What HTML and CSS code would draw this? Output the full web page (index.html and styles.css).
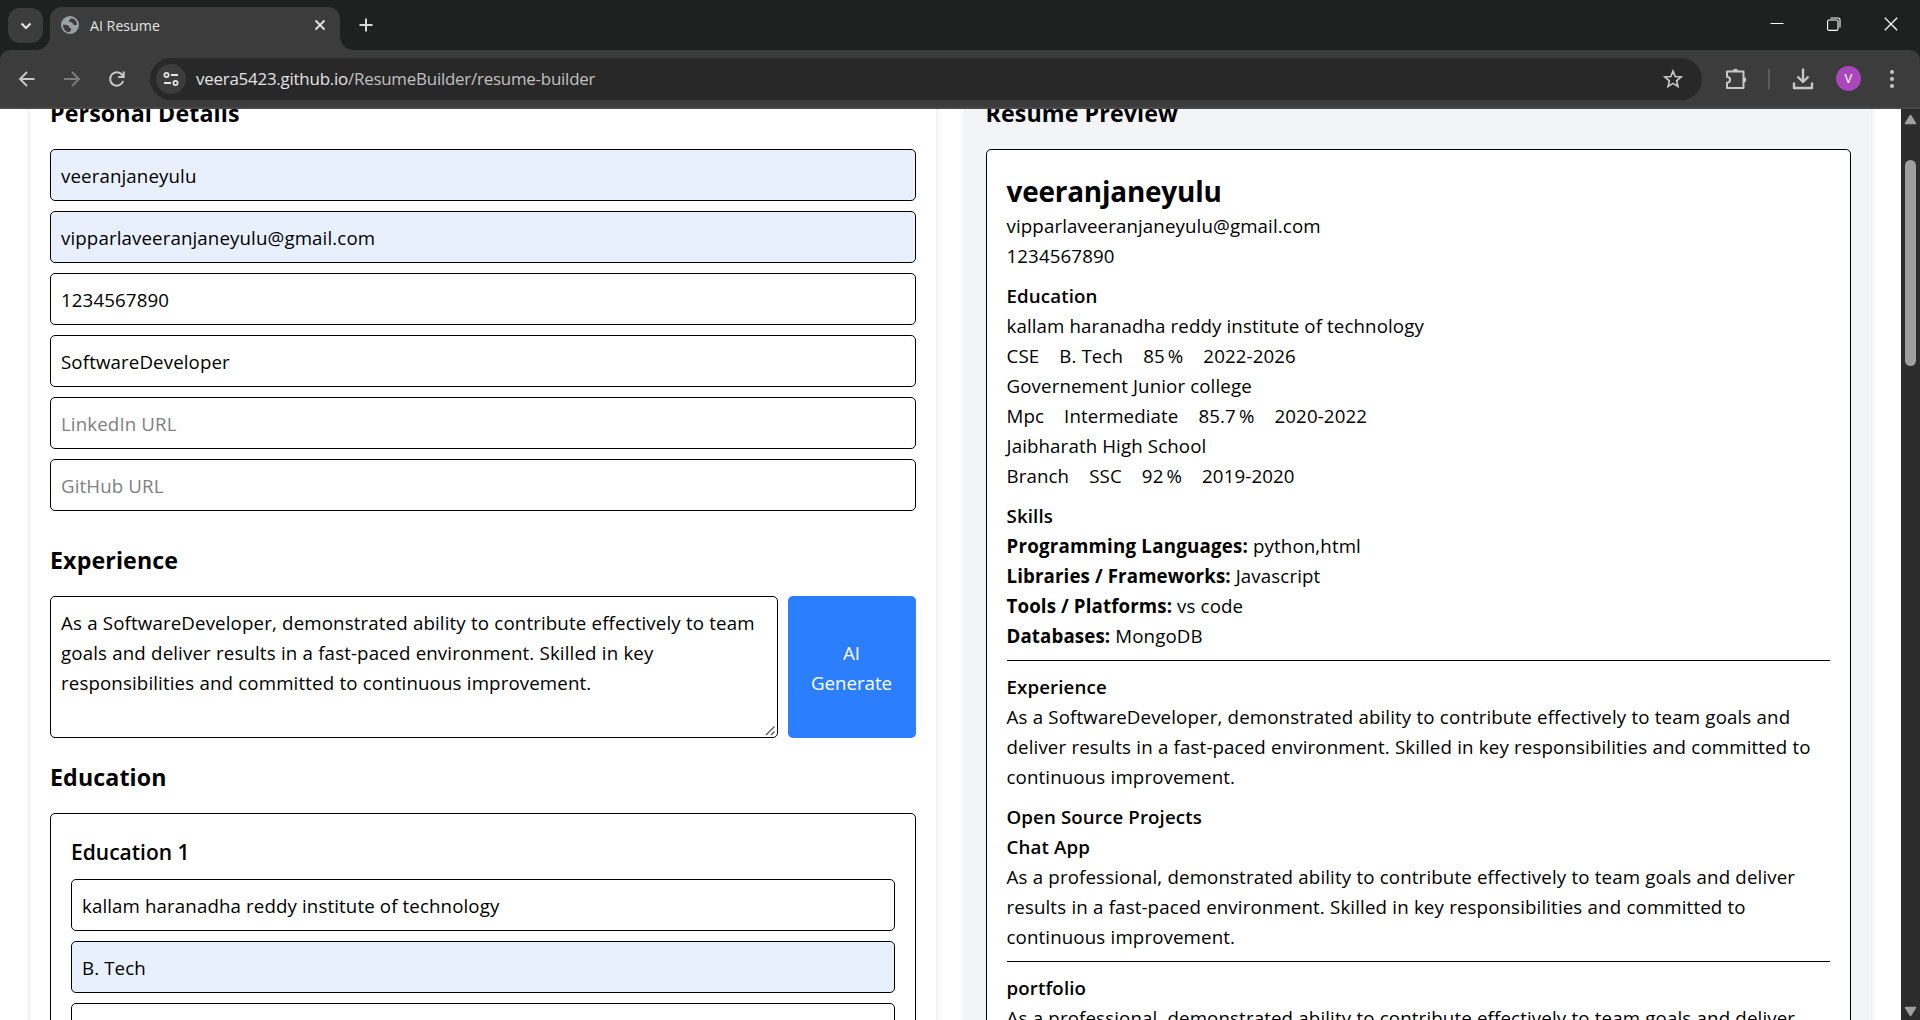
FILE: index.html
```html
<!DOCTYPE html>
<html lang="en">
<head>
<meta charset="utf-8">
<title>AI Resume</title>
<link rel="stylesheet" href="styles.css">
</head>
<body>
<div class="browser">
  <div class="tabstrip">
    <div class="tab-search"><svg width="12" height="12" viewBox="0 0 12 12"><path d="M1.500 3.500L6 8l4.500-4.500" fill="none" stroke="#e3e3e3" stroke-width="2.200"/></svg></div>
    <div class="tab">
      <svg class="globe" width="18" height="18" viewBox="0 0 18 18"><circle cx="9" cy="9" r="9" fill="#9aa0a6"/><path d="M2 8.500l3.500 .5c2 .3 2.500 1.200 2.500 2.500l2 .5v2.500l-2 1.800C4.500 16 1.800 12.500 2 8.500zM10.500 2c-.2 1.500-2.500 1-2.500 3 0 1.300 2 1.200 3 1.600s.6 2.400 2.300 2.400H16c0-3.200-2-6.200-5.500-7z" fill="#3c3c3c"/></svg>
      <span class="tab-title">AI Resume</span>
      <svg class="tab-close" width="12" height="12" viewBox="0 0 12 12"><path d="M1.500 1.500l9 9M10.500 1.500l-9 9" stroke="#e3e3e3" stroke-width="1.800"/></svg>
    </div>
    <svg class="new-tab" width="14" height="14" viewBox="0 0 14 14"><path d="M7 0.500v13M.5 7h13" stroke="#d8d8d8" stroke-width="2"/></svg>
    <div class="window-buttons">
      <svg width="14" height="14" viewBox="0 0 14 14"><path d="M.5 6.500h13" stroke="#fff" stroke-width="1"/></svg>
      <svg width="14" height="14" viewBox="0 0 14 14"><g fill="none" stroke="#fff" stroke-width="1.100"><rect x=".6" y="3" width="10.400" height="10.400" rx="1.500"/><path d="M3.500 1H11a2 2 0 0 1 2 2v7.500"/></g></svg>
      <svg width="14" height="14" viewBox="0 0 14 14"><path d="M.8 .8l12.400 12.400M13.200 .8L.8 13.200" stroke="#fff" stroke-width="1.300"/></svg>
    </div>
  </div>
  <div class="toolbar">
    <svg class="nav" width="18" height="18" viewBox="0 0 18 18"><path d="M16.500 9H2.500M9 2L2 9l7 7" fill="none" stroke="#c7c7c7" stroke-width="1.900"/></svg>
    <svg class="nav" width="18" height="18" viewBox="0 0 18 18"><path d="M1 9h14M9 2l7 7-7 7" fill="none" stroke="#7d7d7d" stroke-width="1.900"/></svg>
    <svg class="nav" width="18" height="18" viewBox="0 0 18 18"><path d="M15.200 11A6.700 6.700 0 1 1 14 4.700L15.500 6.500M15.700 1.500v5.500h-5.500" fill="none" stroke="#c7c7c7" stroke-width="2"/></svg>
    <div class="omnibox">
      <div class="site-info"><svg width="16" height="16" viewBox="0 0 16 16"><g fill="none" stroke="#e3e3e3" stroke-width="1.800"><circle cx="3.500" cy="4" r="2.100"/><circle cx="12.500" cy="12" r="2.100"/><path d="M8 4h7M1 12h7"/></g></svg></div>
      <span class="url">veera5423.github.io<span class="path">/ResumeBuilder/resume-builder</span></span>
      <svg class="star" width="20" height="20" viewBox="0 0 20 20"><path d="M10 2.200l2.200 5.300 5.800.5-4.400 3.800 1.300 5.600-4.900-3-4.900 3 1.300-5.600L2 8l5.800-.5z" fill="none" stroke="#c7c7c7" stroke-width="1.700"/></svg>
    </div>
    <svg class="ext" width="22" height="22" viewBox="0 0 22 22"><path d="M2 3.500h16.500V20H2v-5.200c4.200-.5 4.200-5.500 0-6z" fill="none" stroke="#c7c7c7" stroke-width="2" stroke-linejoin="round"/><path d="M7.700 3.500a2.700 2.700 0 0 1 5.400 0zM18.500 9a2.700 2.700 0 0 1 0 5.400z" fill="#c7c7c7"/></svg>
    <i class="divider"></i>
    <svg class="download" width="22" height="22" viewBox="0 0 22 22"><path d="M11 .5v13M5.500 8.500L11 14l5.500-5.500M2 14.500V20h18v-5.500" fill="none" stroke="#c7c7c7" stroke-width="2.400" stroke-linejoin="round"/></svg>
    <span class="avatar">V</span>
    <svg class="more" width="4" height="18" viewBox="0 0 4 18"><g fill="#c7c7c7"><circle cx="2" cy="2" r="2"/><circle cx="2" cy="9" r="2"/><circle cx="2" cy="16" r="2"/></g></svg>
  </div>
</div>
<div class="viewport">
  <main class="page">
    <section class="card form">
      <h2>Personal Details</h2>
      <div class="fields">
        <div class="input filled">veeranjaneyulu</div>
        <div class="input filled">vipparlaveeranjaneyulu@gmail.com</div>
        <div class="input">1234567890</div>
        <div class="input">SoftwareDeveloper</div>
        <div class="input placeholder">LinkedIn URL</div>
        <div class="input placeholder">GitHub URL</div>
      </div>
      <h2 class="exp">Experience</h2>
      <div class="exp-row">
        <div class="textarea prose">As a SoftwareDeveloper, demonstrated ability to contribute effectively to team<br>goals and deliver results in a fast-paced environment. Skilled in key<br>responsibilities and committed to continuous improvement.
          <svg class="grip" width="11" height="11" viewBox="0 0 11 11"><path d="M1 10l8.500-8.500M6 10l3.500-3.500" stroke="#555" stroke-width="1.300"/></svg>
        </div>
        <button class="generate">AI<br>Generate</button>
      </div>
      <h2 class="edu">Education</h2>
      <div class="edu-box">
        <h3>Education 1</h3>
        <div class="fields">
          <div class="input">kallam haranadha reddy institute of technology</div>
          <div class="input filled">B. Tech</div>
          <div class="input"></div>
        </div>
      </div>
    </section>
    <section class="card preview">
      <h2>Resume Preview</h2>
      <div class="resume">
        <h1>veeranjaneyulu</h1>
        <p>vipparlaveeranjaneyulu@gmail.com</p>
        <p>1234567890</p>
        <h4>Education</h4>
        <p>kallam haranadha reddy institute of technology</p>
        <p class="row"><span>CSE</span><span>B. Tech</span><span>85<i>%</i></span><span>2022-2026</span></p>
        <p>Governement Junior college</p>
        <p class="row"><span>Mpc</span><span>Intermediate</span><span>85.7<i>%</i></span><span>2020-2022</span></p>
        <p>Jaibharath High School</p>
        <p class="row"><span>Branch</span><span>SSC</span><span>92<i>%</i></span><span>2019-2020</span></p>
        <h4>Skills</h4>
        <p><b class="wide">Programming Languages:</b> python,html</p>
        <p><b>Libraries / Frameworks:</b> Javascript</p>
        <p><b>Tools / Platforms:</b> vs code</p>
        <p><b>Databases:</b> MongoDB</p>
        <hr>
        <h4>Experience</h4>
        <p class="prose">As a SoftwareDeveloper, demonstrated ability to contribute effectively to team goals and<br>deliver results in a fast-paced environment. Skilled in key responsibilities and committed to<br>continuous improvement.</p>
        <h4>Open Source Projects</h4>
        <h5>Chat App</h5>
        <p class="prose">As a professional, demonstrated ability to contribute effectively to team goals and deliver<br>results in a fast-paced environment. Skilled in key responsibilities and committed to<br>continuous improvement.</p>
        <hr>
        <h5>portfolio</h5>
        <p class="prose">As a professional, demonstrated ability to contribute effectively to team goals and deliver</p>
      </div>
    </section>
  </main>
  <div class="scrollbar">
    <svg width="13" height="11" viewBox="0 0 13 11"><path d="M6.500 1.500L11.500 9.500H1.500z" fill="#9f9f9f" stroke="#9f9f9f" stroke-width="1.500" stroke-linejoin="round"/></svg>
    <div class="thumb"></div>
    <svg width="13" height="11" viewBox="0 0 13 11"><path d="M6.500 9.500L11.500 1.500H1.500z" fill="#9f9f9f" stroke="#9f9f9f" stroke-width="1.500" stroke-linejoin="round"/></svg>
  </div>
</div>
</body>
</html>
```
FILE: styles.css
```css
* { box-sizing: border-box; margin: 0; padding: 0; }
body { width: 1920px; height: 1020px; overflow: hidden; display: flex; flex-direction: column; background: #fff; color: #000; font: 18.7px/30px "Open Sans", "Noto Sans", sans-serif; }
svg { display: block; flex: none; }
.browser { height: 109px; flex: none; background: #1f2120; color: #e3e3e3; }
.tabstrip { height: 50px; display: flex; align-items: flex-start; padding: 7px 0 0 8px; }
.tab-search { width: 35px; height: 35px; margin-top: 1px; border-radius: 12px; background: #3c3c3c; display: grid; place-items: center; }
.tab { position: relative; width: 290px; height: 43px; margin-left: 7px; padding: 0 14px 7px 11px; border-radius: 12px 12px 0 0; background: #3c3c3c; display: flex; align-items: center; }
.tab::before, .tab::after { content: ""; position: absolute; bottom: 0; width: 13px; height: 13px; }
.tab::before { left: -13px; background: radial-gradient(circle at 0 0, transparent 12.5px, #3c3c3c 13px); }
.tab::after { right: -13px; background: radial-gradient(circle at 100% 0, transparent 12.5px, #3c3c3c 13px); }
.tab-title { margin-left: 11px; padding-top: 1px; font-size: 14.2px; line-height: 20px; }
.tab-close { margin-left: auto; }
.new-tab { margin: 11px 0 0 19px; }
.window-buttons { margin: 10px 22px 0 auto; display: flex; gap: 43px; }
.toolbar { height: 59px; background: #3c3c3c; border-bottom: 2px solid #474747; border-radius: 10px 10px 0 0; display: flex; align-items: center; padding: 0 26px 0 18px; }
.nav { margin-right: 27px; }
.omnibox { width: 1552px; height: 42px; margin-left: -3px; border-radius: 21px; background: #282828; display: flex; align-items: center; padding: 0 19px 0 6px; }
.site-info { width: 30px; height: 30px; border-radius: 50%; background: #3c3c3c; display: grid; place-items: center; }
.url { margin-left: 10px; padding-top: 1px; font-size: 16.9px; letter-spacing: -.22px; color: #e3e3e3; }
.path { color: #c0c0c0; }
.star { margin-left: auto; }
.ext { margin-left: 23px; }
.divider { width: 2px; height: 20px; margin-left: 21px; background: #5c5c5c; }
.download { margin-left: 22px; }
.avatar { width: 25px; height: 25px; margin-left: 22px; border-radius: 50%; background: #ab47bc; color: #fff; font: 13px/25px Roboto, sans-serif; text-align: center; }
.more { margin-left: auto; }

.viewport { flex: 1; min-height: 0; display: flex; overflow: hidden; letter-spacing: .12px; }
.page { flex: 1; display: grid; grid-template-columns: 1fr 1fr; gap: 30px; padding: 0 30px; overflow: hidden; }
.card { height: 1000px; padding: 0 20px; margin-top: -15px; box-shadow: 0 0 7px rgba(0,0,0,.13); }
.preview { background: #f3f4f6; }
h2 { font-size: 23.2px; line-height: 35px; font-weight: 700; padding-top: 2px; margin-bottom: 18px; }
h2.exp { margin-top: 30px; }
h2.edu { margin-top: 20px; }
.fields { display: flex; flex-direction: column; gap: 10px; }
.input { height: 52px; border: 1px solid #000; border-radius: 5px; padding: 11px 10px 9px; line-height: 30px; background: #fff; white-space: nowrap; }
.filled { background: #e8f0fe; }
.placeholder { color: #808080; }
.prose { letter-spacing: .13px; word-spacing: .2px; }
.wide { letter-spacing: .22px; }
.exp-row { display: flex; gap: 10px; }
.textarea { position: relative; flex: 1; height: 142px; border: 1px solid #000; border-radius: 5px; padding: 11px 10px; white-space: nowrap; }
.grip { position: absolute; right: 1px; bottom: 1px; }
.generate { width: 128px; padding-top: 2px; border: 0; border-radius: 5px; background: #2b7fff; color: #fff; font: inherit; }
.edu-box { height: 300px; border: 1px solid #000; border-radius: 5px; padding: 20px; }
h3 { font-size: 21px; line-height: 35px; font-weight: 600; padding-top: 1px; margin-bottom: 9px; letter-spacing: 0; }
.resume { height: 1000px; padding: 20px; border: 1px solid #000; border-radius: 5px; background: #fff; white-space: nowrap; }
h1 { font-size: 27.9px; line-height: 40px; padding-top: 1px; font-weight: 700; letter-spacing: -.2px; }
h4, h5 { font-size: inherit; line-height: 30px; font-weight: 600; }
h4 { margin-top: 10px; }
.row { display: flex; gap: 20px; }
.row i { font-style: normal; margin-left: 3px; }
hr { border: 0; height: 1px; background: #000; margin: 9px 0 11px; }
.scrollbar { width: 19px; background: #2c2c2c; display: flex; flex-direction: column; align-items: center; padding: 5px 0 3px; }
.thumb { width: 11px; height: 206px; margin: 35px 0 auto; border-radius: 6px; background: #9f9f9f; }
```
